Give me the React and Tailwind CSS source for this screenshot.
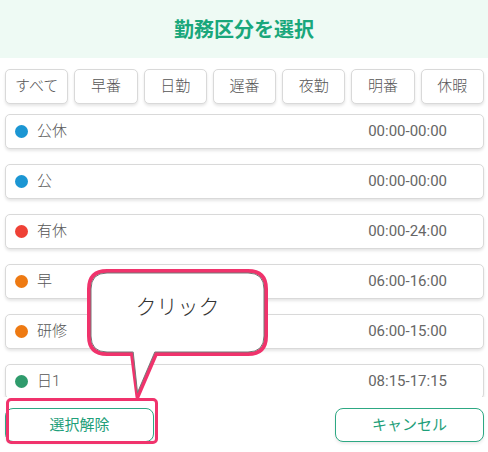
import React from "react";

const filters = ["すべて", "早番", "日勤", "遅番", "夜勤", "明番", "休暇"];
const items = [
  { name: "公休", time: "00:00-00:00", color: "bg-[#1b96d3]" },
  { name: "公", time: "00:00-00:00", color: "bg-[#1b96d3]" },
  { name: "有休", time: "00:00-24:00", color: "bg-[#ef4136]" },
  { name: "早", time: "06:00-16:00", color: "bg-[#ee7a12]" },
  { name: "研修", time: "06:00-15:00", color: "bg-[#ee7a12]" },
  { name: "日1", time: "08:15-17:15", color: "bg-[#2f9b6c]" },
];

function bubblePath(d) {
  const x0 = 89 + d, x1 = 266 - d, y0 = 271 + d, y1 = 354 - d, r = 18 - d;
  const tl = 132 + d * 0.6, tr = 156 - d * 0.6, tipX = 137.5, tipY = 397 - d * 2.2;
  return `M${x0 + r},${y0} H${x1 - r} Q${x1},${y0} ${x1},${y0 + r} V${y1 - r} Q${x1},${y1} ${x1 - r},${y1} H${tr} L${tipX},${tipY} L${tl},${y1} H${x0 + r} Q${x0},${y1} ${x0},${y1 - r} V${y0 + r} Q${x0},${y0} ${x0 + r},${y0} Z`;
}

export default function App() {
  return (
    <div className="relative w-[488px] h-[452px] overflow-hidden bg-white font-['Roboto','Noto_Sans_CJK_JP',sans-serif]">
      <div className="h-[58px] flex items-center justify-center bg-[#eefaf4]">
        <span className="text-[20px] font-bold text-[#19a77b] font-['Noto_Sans_CJK_JP',sans-serif]">勤務区分を選択</span>
      </div>

      <div className="mt-[11px] px-[5px] pr-[4px] flex gap-[6px]">
        {filters.map((f) => (
          <div
            key={f}
            className="flex-1 h-[35px] flex items-center justify-center rounded-[5px] border border-[#d9d9d9] bg-white shadow-[0_2px_3px_rgba(0,0,0,0.10)] text-[15px] font-light text-[#555]"
          >
            {f}
          </div>
        ))}
      </div>

      <div className="mt-[10px] h-[283px] overflow-hidden px-[5px] pr-[4px] flex flex-col gap-[15px]">
        {items.map((it) => (
          <div
            key={it.name}
            className="shrink-0 h-[35px] flex items-center rounded-[5px] border border-[#d9d9d9] bg-white shadow-[0_2px_3px_rgba(0,0,0,0.10)] pl-[9px] pr-[36px]"
          >
            <span className={`w-[13px] h-[13px] rounded-full ${it.color}`} />
            <span className="ml-[9px] text-[15px] font-light text-[#555]">{it.name}</span>
            <span className="ml-auto text-[15px] text-[#666]">{it.time}</span>
          </div>
        ))}
      </div>

      <div className="mt-[11px] px-[5px] pr-[4px] flex justify-between">
        <button className="w-[149px] h-[34px] rounded-[8px] border border-[#2da883] bg-white text-[15px] text-[#1fa07a] shadow-[0_2px_3px_rgba(0,0,0,0.08)]">
          選択解除
        </button>
        <button className="w-[149px] h-[34px] rounded-[8px] border border-[#2da883] bg-white text-[15px] text-[#1fa07a] shadow-[0_2px_3px_rgba(0,0,0,0.08)]">
          キャンセル
        </button>
      </div>

      <svg className="absolute left-0 top-0 pointer-events-none" width="488" height="452" viewBox="0 0 488 452">
        <path d={bubblePath(0)} fill="white" stroke="#f0336c" strokeWidth="4" strokeLinejoin="round" />
        <path d={bubblePath(2)} fill="white" stroke="#777" strokeWidth="1" strokeLinejoin="round" />
      </svg>
      <div className="absolute left-[89px] top-[273px] w-[177px] h-[66px] flex items-center justify-center text-[21px] font-light text-[#333] font-['Noto_Sans_CJK_JP',sans-serif]">
        クリック
      </div>
      <div className="absolute left-[6px] top-[398px] w-[152px] h-[46px] rounded-[5px] border-[3px] border-[#f0336c] pointer-events-none" />
    </div>
  );
}
